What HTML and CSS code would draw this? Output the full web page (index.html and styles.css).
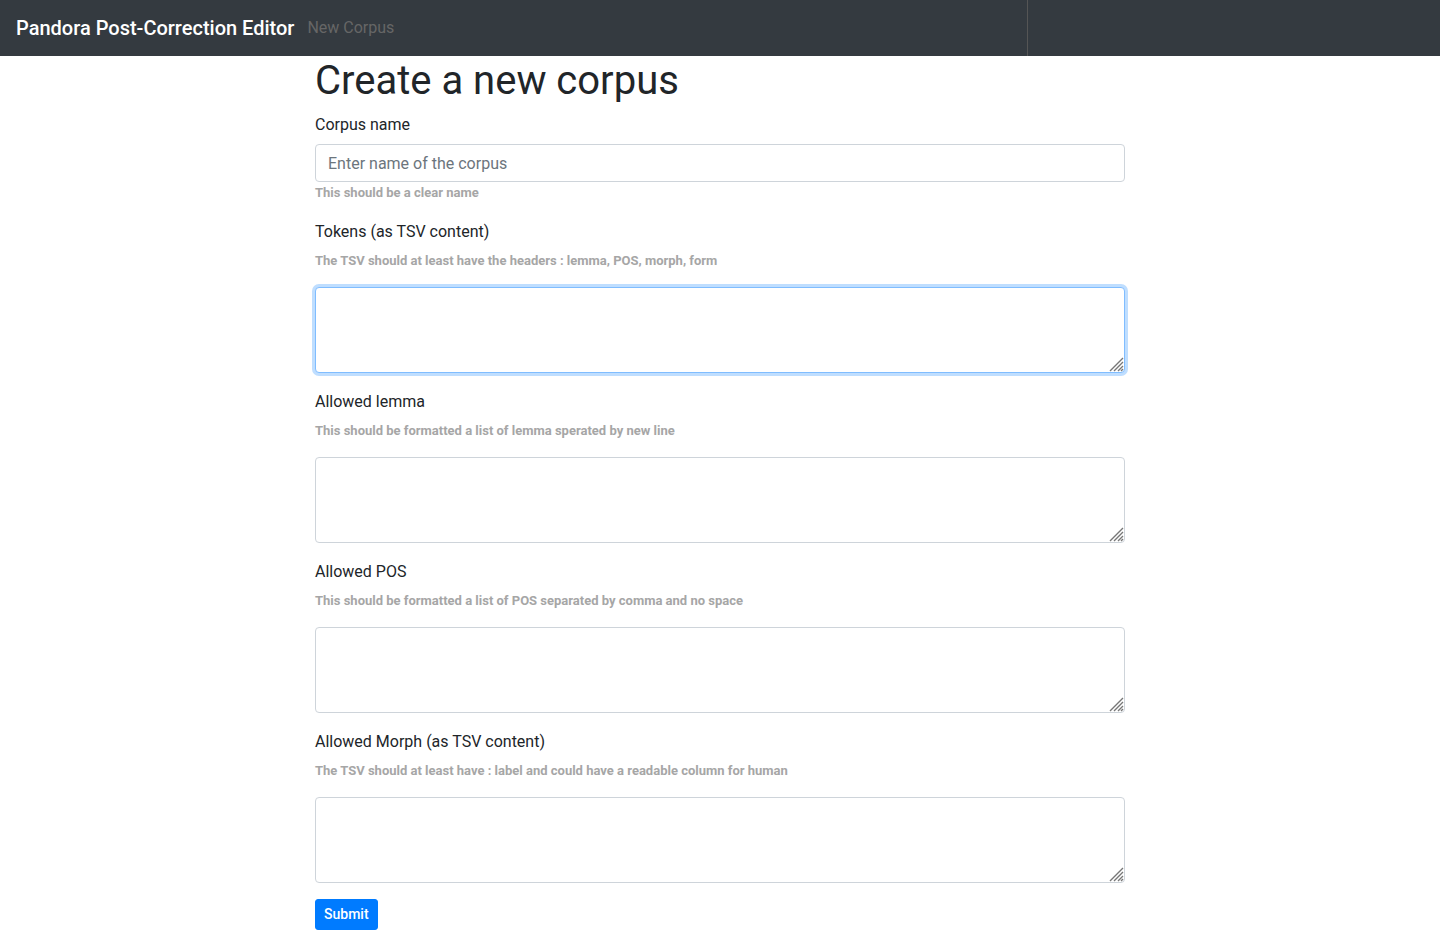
FILE: index.html
```html
<!DOCTYPE html>
<html lang="en">
<head>
<meta charset="utf-8">
<title>Pandora Post-Correction Editor</title>
<link rel="stylesheet" href="styles.css">
</head>
<body>
<nav class="navbar">
  <a class="brand" href="#">Pandora Post-Correction Editor</a>
  <a class="nav-link" href="#">New Corpus</a>
  <div class="nav-aside"></div>
</nav>
<main class="container">
  <h1 class="title">Create a new corpus</h1>
  <form>
    <div class="group">
      <label class="label" for="name">Corpus name</label>
      <input class="control" id="name" type="text" placeholder="Enter name of the corpus">
      <small class="hint hint-below">This should be a clear name</small>
    </div>
    <div class="group">
      <label class="label" for="tokens">Tokens (as TSV content)</label>
      <p class="hint">The TSV should at least have the headers : lemma, POS, morph, form</p>
      <textarea class="control area active" id="tokens" rows="3"></textarea>
    </div>
    <div class="group">
      <label class="label" for="lemma">Allowed lemma</label>
      <p class="hint">This should be formatted a list of lemma sperated by new line</p>
      <textarea class="control area" id="lemma" rows="3"></textarea>
    </div>
    <div class="group">
      <label class="label" for="pos">Allowed POS</label>
      <p class="hint">This should be formatted a list of POS separated by comma and no space</p>
      <textarea class="control area" id="pos" rows="3"></textarea>
    </div>
    <div class="group">
      <label class="label" for="morph">Allowed Morph (as TSV content)</label>
      <p class="hint">The TSV should at least have : label and could have a readable column for human</p>
      <textarea class="control area" id="morph" rows="3"></textarea>
    </div>
    <button class="submit" type="submit">Submit</button>
  </form>
</main>
</body>
</html>
```
FILE: styles.css
```css
*, *::before, *::after { box-sizing: border-box; }

body {
  margin: 0;
  background: #fff;
  color: #212529;
  font-family: Roboto, "Liberation Sans", sans-serif;
  font-size: 16px;
  line-height: 24px;
}

.navbar {
  display: flex;
  align-items: center;
  gap: 13px;
  height: 56px;
  padding-left: 16px;
  background: #343a40;
}

.brand {
  color: #fff;
  font-size: 20px;
  font-weight: 500;
  line-height: 30px;
  text-decoration: none;
}

.nav-link {
  color: #666;
  text-decoration: none;
}

.nav-aside {
  align-self: stretch;
  width: 413px;
  margin-left: auto;
  border-left: 1px solid #555;
}

.container {
  width: 100%;
  max-width: 840px;
  margin: 0 auto;
  padding: 0 15px;
}

.title {
  margin: 0;
  padding: 1px 0 7px;
  font-size: 40px;
  font-weight: 400;
  line-height: 48px;
}

.group { margin-bottom: 16px; }

.label {
  display: block;
  padding: 1px 0 7px;
}

.control {
  display: block;
  width: 100%;
  padding: 7px 12px 5px;
  border: 1px solid #ced4da;
  border-radius: 4px;
  background: #fff;
  color: #495057;
  font: inherit;
  outline: 0;
}

.control::placeholder {
  color: #6c757d;
  opacity: 1;
}

.area {
  overflow: auto;
  resize: vertical;
}

.area::-webkit-resizer {
  background: url("data:image/svg+xml,%3Csvg xmlns='http://www.w3.org/2000/svg' width='15' height='15'%3E%3Cpath d='M1 14L14 1M5 14L14 5M9 14L14 9M12 14L14 12' stroke='%23777' stroke-width='1.4' fill='none'/%3E%3C/svg%3E") right bottom no-repeat;
}

.active {
  border-color: #80bdff;
  box-shadow: 0 0 0 3px #bfdeff;
}

.hint {
  display: block;
  margin: 0 0 16px;
  color: #a6a6a6;
  font-size: 13px;
  font-weight: 700;
  line-height: 20px;
}

.hint-below {
  margin-bottom: 0;
  line-height: 21px;
}

.submit {
  display: block;
  padding: 4px 8px;
  border: 1px solid #007bff;
  border-radius: 3px;
  background: #007bff;
  color: #fff;
  font-family: inherit;
  font-size: 14px;
  font-weight: 500;
  line-height: 21px;
}
```
